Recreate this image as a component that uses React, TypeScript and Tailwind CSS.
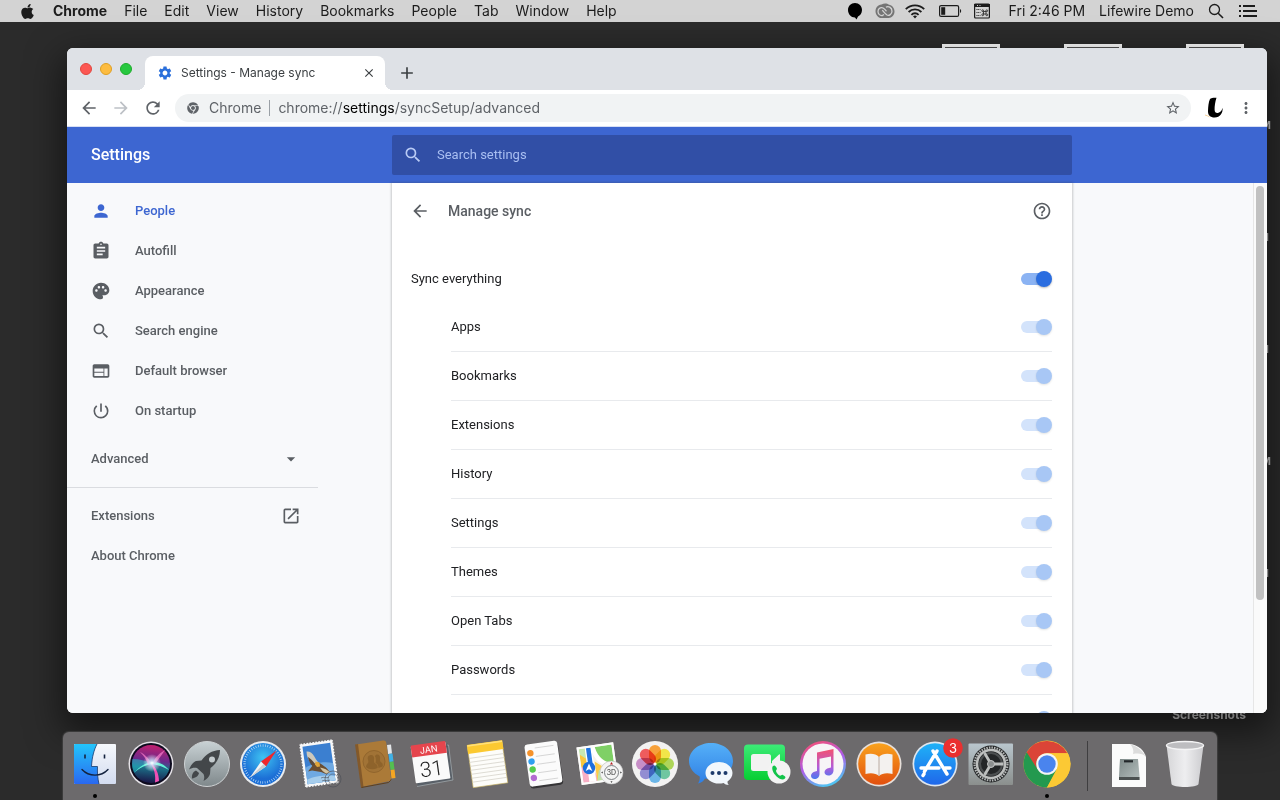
import { useId, type ReactNode } from "react";
import { clsx } from "clsx";
import { FaApple, FaChrome } from "react-icons/fa";
import {
    MdAdd,
    MdArrowBack,
    MdArrowDropDown,
    MdArrowForward,
    MdAssignment,
    MdClose,
    MdHelpOutline,
    MdMoreVert,
    MdOpenInNew,
    MdPalette,
    MdPerson,
    MdPowerSettingsNew,
    MdRefresh,
    MdSearch,
    MdSettings,
    MdStarBorder,
    MdWeb,
} from "react-icons/md";

const menus = ["File", "Edit", "View", "History", "Bookmarks", "People", "Tab", "Window", "Help"];

const sections = [
    { label: "People", icon: <MdPerson /> },
    { label: "Autofill", icon: <MdAssignment /> },
    { label: "Appearance", icon: <MdPalette /> },
    { label: "Search engine", icon: <MdSearch /> },
    { label: "Default browser", icon: <MdWeb /> },
    { label: "On startup", icon: <MdPowerSettingsNew /> },
];

const syncTypes = [
    "Apps",
    "Bookmarks",
    "Extensions",
    "History",
    "Settings",
    "Themes",
    "Open Tabs",
    "Passwords",
];

export default function App() {
    return (
        <div className="relative isolate flex h-screen flex-col overflow-hidden bg-[#2b2b2b] font-['Roboto',sans-serif]">
            <MenuBar />
            <DesktopFiles />
            <main className="flex min-h-0 flex-1 pt-[26px] pr-[13px] pb-[19px] pl-[67px]">
                <BrowserWindow />
            </main>
            <Dock />
        </div>
    );
}

/* ---------- Menu bar ---------- */

function MenuBar() {
    return (
        <header className="flex h-[22px] shrink-0 items-center justify-between bg-[#d3d3d3] pr-[22px] pl-[19px] font-['Inter',sans-serif] text-sm text-[#1c1c1c]">
            <nav className="flex items-center gap-[17px]">
                <button aria-label="Apple menu" className="text-[17px]">
                    <FaApple />
                </button>
                <button className="font-bold">Chrome</button>
                {menus.map((menu) => (
                    <button key={menu}>{menu}</button>
                ))}
            </nav>
            <div className="flex items-center">
                <svg className="mr-3 h-[18px] w-4" viewBox="0 0 16 18">
                    <path d="M8 1c4 0 7 3 7 7 0 3.500-2 5.500-4 6.500L9.500 17.500 8 15.500C4 15.500 1 12 1 8s3-7 7-7z" fill="#000" />
                </svg>
                <svg className="mr-2.5 h-[18px] w-5" viewBox="0 0 20 18">
                    <path d="M6.500 2.500C2.500 3 .5 6 .5 9.200S3 16 6.500 16h7c3.500 0 6-3 6-6.500S17 3.200 14 2.800C12 1.200 9 1.200 6.500 2.500z" fill="#757575" />
                    <path d="M9 12.500 7.500 13.500C5 14 3 12 3 9.500S5 5.500 7 5.700c1.500.1 2.500 1.300 4.500 3.600M11 5.200c2-1.500 6 0 6 4 0 3-3 4.800-5 3.800-1.500-.8-2.500-2.200-4.700-4.800" fill="none" stroke="#d3d3d3" strokeWidth="1.300" />
                </svg>
                <svg className="mr-3.5 h-4 w-5" viewBox="0 0 20 16">
                    <g fill="none" stroke="#1c1c1c" strokeWidth="1.800">
                        <path d="M.8 6.200a13 13 0 0 1 18.400 0" />
                        <path d="M3.600 9a9 9 0 0 1 12.800 0" />
                        <path d="M6.400 11.800a5 5 0 0 1 7.200 0" />
                    </g>
                    <path d="M10 15.500 8 13.300a3 3 0 0 1 4 0z" fill="#1c1c1c" />
                </svg>
                <svg className="mr-3 h-3.5 w-[23px]" viewBox="0 0 23 14">
                    <rect x=".6" y="1.600" width="19" height="10.800" rx="1.500" fill="none" stroke="#1c1c1c" strokeWidth="1.200" />
                    <rect x="2.200" y="3.200" width="4" height="7.600" fill="#1c1c1c" />
                    <path d="M21 5c1.600.5 1.600 3.500 0 4z" fill="#1c1c1c" />
                </svg>
                <svg className="mr-[19px] size-4" viewBox="0 0 16 16">
                    <rect x=".6" y="1" width="14.800" height="14" rx="1" fill="none" stroke="#1c1c1c" strokeWidth="1.200" />
                    <path d="M0 1h16v3H0z" fill="#1c1c1c" />
                    <path d="M3 2.500h1m1.500 0h1" stroke="#d3d3d3" />
                    <path d="M2.500 6.500h4m-4 3h4m-4 3h4" stroke="#1c1c1c" strokeDasharray="1 .8" />
                    <path d="M9.500 8.500h2.500v2.500h-2.500z" fill="none" stroke="#1c1c1c" strokeWidth=".8" />
                    <g fill="none" stroke="#1c1c1c" strokeWidth=".8">
                        <circle cx="8.700" cy="7.700" r=".9" />
                        <circle cx="12.800" cy="7.700" r=".9" />
                        <circle cx="8.700" cy="11.800" r=".9" />
                        <circle cx="12.800" cy="11.800" r=".9" />
                    </g>
                </svg>
                <span className="mr-3.5">Fri 2:46 PM</span>
                <span className="mr-3.5">Lifewire Demo</span>
                <button aria-label="Spotlight" className="mr-[15px]">
                    <svg className="size-4" viewBox="0 0 16 16" fill="none" stroke="#1c1c1c">
                        <circle cx="6.500" cy="6.500" r="5" strokeWidth="1.300" />
                        <path d="m10.200 10.200 4.800 4.800" strokeWidth="1.600" />
                    </svg>
                </button>
                <button aria-label="Notification center">
                    <svg className="h-3 w-[19px]" viewBox="0 0 19 12" stroke="#1c1c1c" strokeWidth="2">
                        <path d="M0 1h2M4 1h12M0 6h2M4 6h14M0 11h2M4 11h14" />
                    </svg>
                </button>
            </div>
        </header>
    );
}

/* ---------- Desktop files that peek out from behind the window ---------- */

function DesktopFiles() {
    return (
        <div className="absolute inset-0 -z-10 text-[11px] leading-4 font-bold text-[#c8c8c8]">
            <div className="absolute top-11 right-9 flex gap-16">
                <span className="h-10 w-[58px] border-3 border-white bg-[#555]" />
                <span className="h-10 w-[58px] border-3 border-white bg-[#555]" />
                <span className="h-10 w-[58px] border-3 border-white bg-[#555]" />
            </div>
            <div className="absolute top-[118px] right-[9px] flex flex-col items-end gap-24">
                <span>M</span>
                <span className="pr-0.5">M</span>
                <span className="pr-0.5">M</span>
                <span>M</span>
                <span className="pr-0.5">M</span>
            </div>
            <span className="absolute right-[34px] bottom-[77px] font-['Inter',sans-serif] text-xs text-[#d0d0d0]">
                Screenshots
            </span>
        </div>
    );
}

/* ---------- Browser ---------- */

function BrowserWindow() {
    return (
        <section className="flex min-w-0 flex-1 flex-col overflow-hidden rounded-md bg-white shadow-[0_14px_34px_6px_rgba(0,0,0,0.5)]">
            <TabStrip />
            <Toolbar />
            <SettingsHeader />
            <div className="flex min-h-0 flex-1 bg-[#f8f9fb]">
                <Sidebar />
                <SyncCard />
                <div className="flex-1" />
                <div className="w-3.5 shrink-0 border-l border-[#e6e6e6] bg-[#fafafa] px-0.5 pt-[3px]">
                    <div className="h-[414px] w-2 rounded-full bg-[#c1c1c1]" />
                </div>
            </div>
        </section>
    );
}

function TabStrip() {
    return (
        <div className="flex h-[42px] shrink-0 items-end bg-[#dee1e6]">
            <div className="flex h-full w-[78px] gap-2 pt-[15px] pl-[13px]">
                <button aria-label="Close" className="size-3 rounded-full border border-[#e2463f] bg-[#fc5753]" />
                <button aria-label="Minimize" className="size-3 rounded-full border border-[#dfa023] bg-[#fdbc40]" />
                <button aria-label="Zoom" className="size-3 rounded-full border border-[#1dad2b] bg-[#27c840]" />
            </div>
            <div
                className={clsx(
                    "relative flex h-[34px] w-60 items-center rounded-t-lg bg-white pr-[9px] pl-3 text-[#3c4043]",
                    "before:absolute before:bottom-0 before:-left-2 before:size-2 before:bg-[radial-gradient(circle_at_0_0,transparent_8px,#fff_8px)]",
                    "after:absolute after:-right-2 after:bottom-0 after:size-2 after:bg-[radial-gradient(circle_at_100%_0,transparent_8px,#fff_8px)]",
                )}>
                <MdSettings className="size-4 text-[#2a6fdb]" />
                <span className="ml-2 flex-1 font-['Inter',sans-serif] text-xs">Settings - Manage sync</span>
                <button aria-label="Close tab" className="text-[#3c4043]">
                    <MdClose className="size-3.5" />
                </button>
            </div>
            <button aria-label="New tab" className="mb-[7px] ml-3 text-[#3c4043]">
                <MdAdd className="size-5" />
            </button>
        </div>
    );
}

function Toolbar() {
    return (
        <div className="flex h-[37px] shrink-0 items-center border-b border-[#d7dff5] bg-white px-3 text-[#5f6368]">
            <button aria-label="Back">
                <MdArrowBack className="size-5" />
            </button>
            <button aria-label="Forward" className="ml-3 text-[#bdc1c6]" disabled>
                <MdArrowForward className="size-5" />
            </button>
            <button aria-label="Reload" className="ml-3">
                <MdRefresh className="size-5" />
            </button>
            <div className="ml-3 flex h-7 flex-1 items-center rounded-full bg-[#f1f3f4] pr-2.5 pl-3 font-['Inter',sans-serif] text-sm">
                <FaChrome className="size-3" />
                <span className="ml-2.5">Chrome</span>
                <span className="mx-2 h-4 w-px bg-[#9aa0a6]" />
                <a href="#" className="flex-1">
                    chrome://<span className="text-black">settings</span>/syncSetup/advanced
                </a>
                <button aria-label="Bookmark this page">
                    <MdStarBorder className="size-4" />
                </button>
            </div>
            <button aria-label="Profile" className="ml-3">
                <svg className="size-6" viewBox="0 0 24 24">
                    <path d="M7 3c1-1 4.500-1.600 6.500-1.200-1.300 4-2 8.500-1.900 12 .1 2.700 1.700 3.800 3.900 3 2.200-.8 3.500-2.500 4-5 .7 5-2.500 9.700-7.800 9.700-4.600 0-7-2.500-6.700-7C5.200 10.500 5.500 6 7 3z" fill="#000" />
                    <path d="M2 19c1.500.3 3 1 4.500 1.800" stroke="#f5d29d" fill="none" />
                </svg>
            </button>
            <button aria-label="Menu" className="ml-2.5">
                <MdMoreVert className="size-[18px]" />
            </button>
        </div>
    );
}

function SettingsHeader() {
    return (
        <div className="flex h-14 shrink-0 items-center bg-[#3d66d1]">
            <h1 className="w-[325px] shrink-0 pl-6 text-base font-medium text-white">Settings</h1>
            <label className="flex h-10 w-[680px] items-center gap-3.5 rounded-xs bg-[#314fa6] pl-[11px] text-[#b9cbf5]">
                <MdSearch className="size-5" />
                <input
                    type="search"
                    aria-label="Search settings"
                    placeholder="Search settings"
                    className="flex-1 bg-transparent text-[13px] outline-none placeholder:text-[#a9bff2]"
                />
            </label>
        </div>
    );
}

function Sidebar() {
    return (
        <aside className="w-[325px] shrink-0 text-[13px] font-medium text-[#5a5e63]">
            <nav className="w-[251px]">
                <div className="py-2">
                    {sections.map(({ label, icon }) => (
                        <a
                            key={label}
                            href="#"
                            className={clsx(
                                "flex h-10 items-center gap-6 pl-6",
                                label === "People" && "text-[#3d66d1]",
                            )}>
                            <span className="text-xl">{icon}</span>
                            {label}
                        </a>
                    ))}
                </div>
                <button className="mb-2 flex h-10 w-full items-center justify-between pr-[17px] pl-6">
                    Advanced
                    <MdArrowDropDown className="size-5" />
                </button>
                <div className="border-t border-[#dadce0] py-2">
                    <a href="#" className="flex h-10 items-center justify-between pr-[17px] pl-6">
                        Extensions
                        <MdOpenInNew className="size-5" />
                    </a>
                    <a href="#" className="flex h-10 items-center pl-6">
                        About Chrome
                    </a>
                </div>
            </nav>
        </aside>
    );
}

function SyncCard() {
    return (
        <div className="w-[680px] overflow-hidden bg-white shadow-[0_0_2px_1px_rgba(60,64,67,0.25)]">
            <div className="flex h-14 items-center pr-5 pl-[18px] text-[#5a5e63]">
                <button aria-label="Back">
                    <MdArrowBack className="size-5" />
                </button>
                <h2 className="ml-[18px] flex-1 text-sm font-medium">Manage sync</h2>
                <a href="#" aria-label="Help">
                    <MdHelpOutline className="size-5" />
                </a>
            </div>
            <div className="mt-4 pr-5 pl-[19px]">
                <ToggleRow label="Sync everything" />
                <div className="pl-10">
                    {syncTypes.map((type) => (
                        <div key={type} className="border-b border-[#e8eaed]">
                            <ToggleRow label={type} disabled />
                        </div>
                    ))}
                    <ToggleRow disabled />
                </div>
            </div>
        </div>
    );
}

function ToggleRow(props: {
    label?: string,
    disabled?: boolean,
}) {
    const id = useId();

    return (
        <div className="flex h-12 items-center text-[13px] text-[#202124]">
            {props.label && <label htmlFor={id}>{props.label}</label>}
            <input
                id={id}
                type="checkbox"
                role="switch"
                aria-label={props.label ?? "More"}
                defaultChecked
                disabled={props.disabled}
                className={clsx(
                    "relative ml-auto h-4 w-[31px] appearance-none",
                    "before:absolute before:top-0.5 before:left-0 before:h-3 before:w-7 before:rounded-full before:bg-[#8bb3f3]",
                    "after:absolute after:top-0 after:right-0 after:size-4 after:rounded-full after:bg-[#2a6de0] after:shadow-[0_1px_2px_rgba(60,64,67,0.35)]",
                    "disabled:before:bg-[#d3e3fb] disabled:after:bg-[#a8c7f5] disabled:after:shadow-[0_1px_2px_rgba(60,64,67,0.15)]",
                )}
            />
        </div>
    );
}

/* ---------- Dock ---------- */

function Dock() {
    return (
        <footer className="mx-auto flex h-[68px] shrink-0 items-start rounded-t-md bg-[#6c6a6c] px-1 shadow-[0_0_1px_1px_#3d3d3d]">
            <DockIcon name="Finder" running><Finder /></DockIcon>
            <DockIcon name="Siri"><Siri /></DockIcon>
            <DockIcon name="Launchpad"><Launchpad /></DockIcon>
            <DockIcon name="Safari"><Safari /></DockIcon>
            <DockIcon name="Mail"><Mail /></DockIcon>
            <DockIcon name="Contacts"><Contacts /></DockIcon>
            <DockIcon name="Calendar"><Calendar /></DockIcon>
            <DockIcon name="Notes"><Notes /></DockIcon>
            <DockIcon name="Reminders"><Reminders /></DockIcon>
            <DockIcon name="Maps"><Maps /></DockIcon>
            <DockIcon name="Photos"><Photos /></DockIcon>
            <DockIcon name="Messages"><Messages /></DockIcon>
            <DockIcon name="FaceTime"><FaceTime /></DockIcon>
            <DockIcon name="iTunes"><ITunes /></DockIcon>
            <DockIcon name="iBooks"><IBooks /></DockIcon>
            <DockIcon name="App Store"><AppStore /></DockIcon>
            <DockIcon name="System Preferences"><SystemPreferences /></DockIcon>
            <DockIcon name="Chrome" running><ChromeLogo /></DockIcon>
            <span className="mx-3 mt-[9px] h-[50px] w-0.5 border-l border-[#3f3e40]" />
            <DockIcon name="Disk image"><DiskImage /></DockIcon>
            <DockIcon name="Trash"><Trash /></DockIcon>
        </footer>
    );
}

function DockIcon(props: {
    name: string,
    running?: boolean,
    children: ReactNode,
}) {
    return (
        <button aria-label={props.name}>
            <svg className="h-[68px] w-14" viewBox="0 0 56 68">
                {props.children}
                {props.running && <circle cx="28" cy="64" r="2" fill="#000" />}
            </svg>
        </button>
    );
}

function Finder() {
    return (
        <>
            <defs>
                <linearGradient id="finder-l" x1="0" y1="0" x2="0" y2="1">
                    <stop offset="0" stopColor="#23c5fb" />
                    <stop offset="1" stopColor="#2a68f0" />
                </linearGradient>
                <linearGradient id="finder-r" x1="0" y1="0" x2="0" y2="1">
                    <stop offset="0" stopColor="#f6f8fc" />
                    <stop offset="1" stopColor="#d3dcf0" />
                </linearGradient>
            </defs>
            <rect x="7" y="12" width="42" height="40" rx="1" fill="url(#finder-r)" />
            <path d="M8 12h22c-3 6-5 13-5.500 22.500h6c-.3 6 .2 12 1.500 17.500H8a1 1 0 0 1-1-1V13a1 1 0 0 1 1-1z" fill="url(#finder-l)" />
            <path d="M30 12c-3 6-5 13-5.500 22.500h6c-.3 6 .2 12 1.500 17.500" fill="none" stroke="#173a6e" strokeWidth=".8" />
            <path d="M18 22.500v4M37.500 22.500v4" stroke="#14233f" strokeWidth="1.600" />
            <path d="M15 37.500c7 7.500 19 7.500 26 0" fill="none" stroke="#14233f" strokeWidth="1.400" strokeLinecap="round" />
        </>
    );
}

function Siri() {
    return (
        <>
            <defs>
                <linearGradient id="siri" x1=".5" y1="0" x2=".4" y2="1">
                    <stop offset="0" stopColor="#c0206f" />
                    <stop offset=".4" stopColor="#6a2a8c" />
                    <stop offset=".6" stopColor="#1c6f88" />
                    <stop offset="1" stopColor="#1a1446" />
                </linearGradient>
                <radialGradient id="siri-glow">
                    <stop offset="0" stopColor="#fff" />
                    <stop offset=".3" stopColor="#cfe9ff" stopOpacity=".8" />
                    <stop offset="1" stopColor="#fff" stopOpacity="0" />
                </radialGradient>
            </defs>
            <circle cx="28" cy="32" r="22.500" fill="#e4e1e6" />
            <circle cx="28" cy="32" r="21" fill="#0d0a1e" />
            <circle cx="28" cy="32" r="19" fill="url(#siri)" />
            <path d="M9.500 27c7 0 13 2 20 4-8 2-14 5-18 10-2-4-3-9-2-14z" fill="#24b7c4" opacity=".55" />
            <path d="M12 40c6-5 11-7 17-8 6 1 12 3 17 6-5-6-10-8-17-8-7 1-13 5-17 10z" fill="#5ff2d6" />
            <path d="M28 31c-2-5-7-9-11-11 5 5 7 9 8 13zM30 31c2-6 7-10 12-13-4 6-7 10-10 14z" fill="#ef76c4" opacity=".8" />
            <path d="M28 32c3 5 5 11 4 18.500l4-1.500C36 42 33 36 29 31z" fill="#f24fb4" />
            <circle cx="29" cy="31" r="9" fill="url(#siri-glow)" />
        </>
    );
}

function Launchpad() {
    return (
        <>
            <defs>
                <linearGradient id="launchpad" x1="0" y1="0" x2="0" y2="1">
                    <stop offset="0" stopColor="#c8d1d4" />
                    <stop offset="1" stopColor="#7f888b" />
                </linearGradient>
            </defs>
            <circle cx="28" cy="32" r="22.500" fill="url(#launchpad)" stroke="#cfd3d5" strokeWidth="1" />
            <path d="M41 18c-8 .5-14 4-18.500 10.500L17 29c-3 1-5.500 5-7 8.500 2.500-1.500 5-2 8-1.500l6.500 6c1 2.500 1 4 0 7 3.500-2 6-4.500 6.500-7l.5-6C37 32 41 26 41 18z" fill="#43474a" />
            <path d="M17 38.500c-2.500 1-4.500 3.500-4 8 3.500-.5 6.500-2.500 7-5.500z" fill="#43474a" />
            <circle cx="33" cy="27.500" r="3" fill="#c3cacd" />
        </>
    );
}

function Safari() {
    return (
        <>
            <defs>
                <radialGradient id="safari" cy=".35">
                    <stop offset="0" stopColor="#3fc4f2" />
                    <stop offset="1" stopColor="#1c6fd6" />
                </radialGradient>
            </defs>
            <circle cx="28" cy="32" r="23" fill="#e9ecef" />
            <circle cx="28" cy="32" r="21" fill="url(#safari)" />
            <circle cx="28" cy="32" r="18.500" fill="none" stroke="#cfe9fb" strokeWidth="2.400" strokeDasharray=".6 1.800" />
            <path d="M41.500 18.500 31 34.500 26 29.500z" fill="#f0262b" />
            <path d="M31 34.500 15 45.500l11-16z" fill="#f4f4f4" />
            <path d="M31 34.500 15 45.500 28.500 32z" fill="#c9cdd1" />
        </>
    );
}

function Mail() {
    return (
        <>
            <g transform="rotate(-8 28 32)">
                <rect x="11" y="9.500" width="34" height="44" fill="#f7f7f7" />
                <rect x="11" y="9.500" width="34" height="44" fill="none" stroke="#6c6a6c" strokeWidth="1.400" strokeDasharray="1.400 1.600" />
                <rect x="14" y="12.500" width="28" height="38" fill="#3b7fd0" />
                <path d="M14 34c8-4 20-4 28-1v17.500H14z" fill="#6fa9e2" />
                <path d="M14 46c8-3 20-2 28 0v4.500H14z" fill="#a6cdec" />
            </g>
            <path d="M15.500 19.500c3-.5 6 1.500 7.500 4.500 1.500 2.500 2.500 4.500 4.500 6.500l-5 3c-4-3-7-8.500-7-14z" fill="#cdc8bb" />
            <path d="M17 25c2.500 1.500 5 4 8 8l-3 1.500c-2.500-2-4.300-5.500-5-9.500z" fill="#5b4a3a" />
            <path d="M22 33l5-3c4 3 8.500 4.500 12 10.500l-4 1.500-5-2-9-1.500-4 1z" fill="#6a4d31" />
            <path d="M29 35.500c4 .5 8 2.500 10.500 5.500l-4.500.5c-2.500-1.500-4.500-3.500-6-6z" fill="#d2c3a2" />
            <path d="m24.500 29.500 4 1 .5 4-3 .5-2-2.500z" fill="#e0a63b" />
            <circle cx="42" cy="47" r="8" fill="none" stroke="#4b4f57" strokeWidth=".8" opacity=".8" />
            <circle cx="42" cy="47" r="5" fill="none" stroke="#4b4f57" strokeWidth=".7" opacity=".7" />
            <path d="M30 46c3-2 5 1 8-1M31 49c3-2 5 1 8-1" fill="none" stroke="#4b4f57" strokeWidth=".6" />
        </>
    );
}

function Contacts() {
    return (
        <>
            <path d="m40 13 4-.5 1 9-4 .5z" fill="#e3e6e8" />
            <path d="m41.500 22 4-.5 1 8-4 .5z" fill="#3fb1e6" />
            <path d="m42.500 30 4-.5 1 8-4 .5z" fill="#54bf50" />
            <path d="m43.500 38 4-.5 1 8.500-4 .5z" fill="#f5a623" />
            <path d="M9 12.500 36 8.500c2-.2 3 .5 3.300 2.500l4.700 35c.2 2-.5 3-2.500 3.300L14.500 55z" fill="#ab7a38" />
            <path d="m8 12.500 3-.4L16.500 55l-2.500.8z" fill="#83592a" />
            <path d="m14.500 55.500 27-5 2-2 .5-1" fill="none" stroke="#5f401d" />
            <circle cx="27" cy="29.500" r="11" fill="#a17336" stroke="#8e632b" strokeWidth=".9" />
            <path d="M23.500 23c3-.5 4 2 3.500 5-.2 2 0 3 2 4 1 .5 2 2 1.500 4-4 2-9 1.500-11.500-1 0-2 1-3 2-4 .8-1 .3-2-.2-4-.4-2 .7-3.700 2.700-4z" fill="#8e632b" />
            <path d="M29.500 22.500c3-.5 4 2 3.500 4.500-.2 2 .2 3 2 4 .8.500 1 2 .5 3.500l-4 1.500c0-3-1-4-3-5 .7-3 .5-5-.6-7z" fill="#8e632b" />
        </>
    );
}

function Calendar() {
    return (
        <>
            <path d="m41 12 4-.5 4.500 36L15 54l-2-5z" fill="#596068" />
            <path d="M44 13h1.500L50 48 14 54.500" fill="none" stroke="#9aa3a8" strokeWidth=".8" />
            <g transform="rotate(-8 28 30)">
                <rect x="10" y="12" width="35" height="37" rx="1" fill="#fafafa" />
                <path d="M11 11h33a1 1 0 0 1 1 1v11H10V12a1 1 0 0 1 1-1z" fill="#e5454d" />
                <text x="27.500" y="20.500" textAnchor="middle" fontSize="9" fill="#fff" fontFamily="Inter, sans-serif">JAN</text>
                <text x="27.500" y="44" textAnchor="middle" fontSize="21" fontWeight="300" fill="#222" fontFamily="Roboto, sans-serif">31</text>
            </g>
        </>
    );
}

function Notes() {
    return (
        <g transform="rotate(-8 28 32)">
            <rect x="11" y="11" width="35" height="42.500" fill="#fdfdfa" stroke="#c9b25c" strokeWidth=".6" />
            <rect x="10.700" y="10.500" width="35.600" height="9" fill="#fbc931" />
            <path d="M11 11.500h35" stroke="#ffe07a" strokeWidth="1.500" />
            <path d="M11 24h35M11 28h35M11 32h35M11 36h35M11 40h35M11 44h35M11 48h35" stroke="#d2d0c6" strokeWidth=".7" />
        </g>
    );
}

function Reminders() {
    return (
        <g transform="rotate(-8 28 32)">
            <rect x="12.500" y="12" width="33" height="43" rx="3" fill="#353436" />
            <rect x="12" y="10.500" width="33" height="42.500" rx="3" fill="#fbfbfb" />
            <circle cx="17" cy="19.500" r="3.200" fill="#f5922a" />
            <circle cx="17" cy="28" r="3.200" fill="#2f9fef" />
            <circle cx="17" cy="36" r="3.200" fill="#55cc4c" />
            <circle cx="17" cy="44.500" r="3.200" fill="#b36bd0" />
            <path d="M22 15h19M22 23.500h19M22 31.500h19M22 40h19M22 48h19" stroke="#cfcfcf" strokeWidth=".8" />
        </g>
    );
}

function Maps() {
    return (
        <>
            <g transform="rotate(-8 28 32)">
                <rect x="8" y="12.500" width="37" height="38" fill="#f4f1e8" />
                <path d="M10 14.500h7v17h-7z" fill="#c5e8b2" />
                <path d="M10 31h9l8 17.500H10z" fill="#f8aec5" />
                <path d="M10 20l6 5v8h-6z" fill="#fac73c" />
                <path d="M26 14.500h17v19c-9-2-15-8-17-19z" fill="#7fd066" />
                <path d="M24 14.500c1 12 9 20 19 21" fill="none" stroke="#fff" strokeWidth="4" />
                <path d="m24 29 11 9-11 10.500z" fill="#fbcb48" />
                <path d="M27 38h16v10.500H24z" fill="#bfe3a6" />
                <path d="M19.500 14.500v34" stroke="#fff" strokeWidth="7" />
                <path d="M19.500 14.500v20" stroke="#1f74e0" strokeWidth="4.500" />
                <rect x="9" y="13.500" width="35" height="36" fill="none" stroke="#fdfdfd" strokeWidth="2" />
            </g>
            <circle cx="18" cy="36" r="6.200" fill="#1d6fdd" />
            <path d="m18 31.500 3.300 7.500-3.300-1.700-3.300 1.700z" fill="#fff" />
            <circle cx="40.500" cy="40.500" r="11.500" fill="#f4f4f4" stroke="#bcbcbc" strokeWidth=".6" />
            <circle cx="40.500" cy="40.500" r="7" fill="none" stroke="#6f7376" strokeWidth=".9" />
            <text x="40.500" y="43" textAnchor="middle" fontSize="7" fill="#333" fontFamily="Inter, sans-serif">3D</text>
            <path d="m40.500 30 1.500 2.500h-3z" fill="#b32020" />
            <path d="m40.500 51 1-1.800h-2zM30 40.500l1.800 1v-2zM51 40.500l-1.800 1v-2z" fill="#444" />
        </>
    );
}

const petals = ["#f89a2b", "#f2e43a", "#a8d34c", "#64c29a", "#5fb0e6", "#8a84d0", "#c485c4", "#ee4f50"];

function Photos() {
    return (
        <>
            <circle cx="28" cy="32" r="23" fill="#f3f2f2" />
            <g className="isolate">
                {petals.map((color, i) => (
                    <rect
                        key={color}
                        x="22"
                        y="13"
                        width="12"
                        height="18"
                        rx="6"
                        fill={color}
                        opacity=".92"
                        className="mix-blend-multiply"
                        transform={`rotate(${i * 45} 28 32)`}
                    />
                ))}
            </g>
            <circle cx="28" cy="32" r="1.500" fill="#fff" />
        </>
    );
}

function Messages() {
    return (
        <>
            <defs>
                <linearGradient id="messages" x1="0" y1="0" x2="0" y2="1">
                    <stop offset="0" stopColor="#55b0f8" />
                    <stop offset="1" stopColor="#2f7fe4" />
                </linearGradient>
            </defs>
            <path d="M28 11c12.500 0 22 8 22 18s-9.500 18-22 18c-2 0-4-.2-6-.6-1.500 2.600-3.500 4.200-7 5 1.500-2.200 2-4.500 1.700-7C10 41 6 35.500 6 29c0-10 9.500-18 22-18z" fill="url(#messages)" />
            <path d="M36 30c7.500 0 13.500 4.800 13.500 11 0 3.500-2 6.500-5 8.500-.1 1.500.4 2.600 1.300 3.600-2.400-.1-4-.9-5.200-2-1.500.4-3 .5-4.600.5-7.500 0-13.500-4.500-13.500-10.600S28.500 30 36 30z" fill="#f2f7fc" />
            <circle cx="29.500" cy="41" r="2" fill="#1d3a6b" />
            <circle cx="36" cy="41" r="2" fill="#1d3a6b" />
            <circle cx="42.500" cy="41" r="2" fill="#1d3a6b" />
        </>
    );
}

function FaceTime() {
    return (
        <>
            <defs>
                <linearGradient id="facetime" x1="0" y1="0" x2="0" y2="1">
                    <stop offset="0" stopColor="#3ceb77" />
                    <stop offset="1" stopColor="#07ce33" />
                </linearGradient>
            </defs>
            <rect x="5" y="12.500" width="41" height="35.500" rx="4" fill="url(#facetime)" />
            <rect x="12" y="22" width="20" height="17" rx="2.500" fill="#f2f2f2" />
            <path d="m33 29 7-6.500c.8-.5 1 .2 1 1v14l-8-5z" fill="#f2f2f2" />
            <circle cx="40" cy="40" r="11.500" fill="#f3f3f3" />
            <path d="M34 34c1.300-1.200 2.500-.5 3.800 2.200.6 1.300-1 1.900-.8 2.800.6 2.200 2 3.800 4 4.700.9.300 1.600-1.400 2.900-.8 2.600 1.300 3.100 2.400 2 3.600-1.700 1.900-5 1.200-8.300-2-3.600-3.500-5.500-8.600-3.600-10.500z" fill="#12c44a" />
        </>
    );
}

function ITunes() {
    return (
        <>
            <defs>
                <linearGradient id="itunes-ring" x1=".2" y1="0" x2=".6" y2="1">
                    <stop offset="0" stopColor="#f64f70" />
                    <stop offset=".5" stopColor="#b05ae8" />
                    <stop offset="1" stopColor="#4bc8f2" />
                </linearGradient>
                <linearGradient id="itunes-note" x1="0" y1="0" x2="0" y2="1">
                    <stop offset="0" stopColor="#f4506e" />
                    <stop offset=".6" stopColor="#b45bd8" />
                    <stop offset="1" stopColor="#4a79f0" />
                </linearGradient>
            </defs>
            <circle cx="28" cy="32" r="23" fill="url(#itunes-ring)" />
            <circle cx="28" cy="32" r="20.500" fill="#f7f5f7" />
            <path d="M22 20.500 38.500 17v21.500c0 3-2.500 5-5 5s-4-1.500-4-3.200c0-2.300 2-3.800 4.500-4.300l2-.5V24.500l-11.500 2.300V42c0 3-2.300 5-4.800 5s-3.700-1.500-3.700-3.200c0-2.300 2-3.800 4.200-4.300l1.800-.5z" fill="url(#itunes-note)" />
        </>
    );
}

function IBooks() {
    return (
        <>
            <defs>
                <linearGradient id="ibooks" x1="0" y1="0" x2="0" y2="1">
                    <stop offset="0" stopColor="#f9a21c" />
                    <stop offset="1" stopColor="#e2500f" />
                </linearGradient>
            </defs>
            <circle cx="28" cy="32" r="22.500" fill="#e6dfda" />
            <circle cx="28" cy="32" r="20.800" fill="url(#ibooks)" />
            <path d="M28 25c-3-3.500-8.500-4-13.500-2.500V42c5-1.500 10.500-1 13.500 2 3-3 8.500-3.500 13.500-2V22.500C36.500 21 31 21.500 28 25z" fill="#f3f1ef" />
            <path d="M28 25v19" stroke="#b9aaa0" strokeWidth="1" />
        </>
    );
}

function AppStore() {
    return (
        <>
            <defs>
                <linearGradient id="appstore" x1="0" y1="0" x2="0" y2="1">
                    <stop offset="0" stopColor="#1fb2f7" />
                    <stop offset="1" stopColor="#1f67ea" />
                </linearGradient>
            </defs>
            <circle cx="28" cy="32" r="22.500" fill="#dfe6ee" />
            <circle cx="28" cy="32" r="20.800" fill="url(#appstore)" />
            <path d="m26 19 14 23M30 19 17.500 39.500M14 36h18M38 36h5M17 42l-1 1.500" fill="none" stroke="#fff" strokeWidth="3.400" strokeLinecap="round" />
            <circle cx="46" cy="16" r="9.800" fill="#ea2f2f" />
            <text x="46" y="20.500" textAnchor="middle" fontSize="13" fill="#fff" fontFamily="Inter, sans-serif">3</text>
        </>
    );
}

function SystemPreferences() {
    return (
        <>
            <defs>
                <linearGradient id="sysprefs" x1="0" y1="0" x2="0" y2="1">
                    <stop offset="0" stopColor="#b9c6cd" />
                    <stop offset="1" stopColor="#8b8f8d" />
                </linearGradient>
            </defs>
            <rect x="5.500" y="11.500" width="44.500" height="41.500" rx="1" fill="url(#sysprefs)" />
            <circle cx="28" cy="32" r="18.500" fill="#242627" />
            <circle cx="28" cy="32" r="16.500" fill="none" stroke="#b4b7b7" strokeWidth="2.200" strokeDasharray="1.500 1.090" />
            <circle cx="28" cy="32" r="14" fill="none" stroke="#bdbfbe" strokeWidth="2.600" />
            <circle cx="28" cy="32" r="11" fill="none" stroke="#4c4f50" strokeWidth="2" />
            <path d="M28 32h12.500M28 32l-6.500-11M28 32l-6.500 11" stroke="#bdbfbe" strokeWidth="2.800" />
            <circle cx="28" cy="32" r="3.500" fill="#8d9090" stroke="#c4c6c5" />
        </>
    );
}

function ChromeLogo() {
    return (
        <>
            <circle cx="28" cy="32" r="23.500" fill="#fcc934" />
            <path d="M28 32 7.650 20.250A23.500 23.500 0 0 0 28 55.500l10.200-17.600z" fill="#23994f" />
            <path d="M7.650 20.250A23.500 23.500 0 0 1 48.350 21.300L28 21.300a10.800 10.800 0 0 0-9.400 16.100z" fill="#db4437" />
            <path d="M28 21.200h20.900a23.500 23.500 0 0 1 2.600 10.800A23.500 23.500 0 0 1 28 55.500l9.400-18.100z" fill="#fcc934" />
            <circle cx="28" cy="32" r="10.800" fill="#f5f5f5" />
            <circle cx="28" cy="32" r="8.700" fill="#4a84ee" />
        </>
    );
}

function DiskImage() {
    return (
        <>
            <defs>
                <linearGradient id="disk" x1="0" y1="0" x2="1" y2="1">
                    <stop offset="0" stopColor="#7d8988" />
                    <stop offset="1" stopColor="#b5bfbe" />
                </linearGradient>
            </defs>
            <path d="M11 12h18c8 1 14 6 16 13v30H11z" fill="#fbfbfb" />
            <path d="M29 12c3 3 4 7 3 10 5-1 10-.5 13 3-3-6-9-11-16-13z" fill="#dcdcdc" />
            <path d="M19 27h18l1.500 17v4h-20.500v-4z" fill="url(#disk)" />
            <path d="M18 45h20.500v3H18z" fill="#4b5151" />
            <path d="M23 29.300h9" stroke="#22272a" strokeWidth="2.200" />
        </>
    );
}

function Trash() {
    return (
        <>
            <defs>
                <linearGradient id="trash">
                    <stop offset="0" stopColor="#d6d6d8" />
                    <stop offset=".5" stopColor="#eeeef0" />
                    <stop offset="1" stopColor="#cccccf" />
                </linearGradient>
            </defs>
            <path d="M9.500 13 14.500 52c1 4 26 4 27 0l5-39z" fill="url(#trash)" />
            <ellipse cx="28" cy="13.500" rx="18.500" ry="4" fill="#bdbdc0" stroke="#f4f4f5" strokeWidth="1.400" />
        </>
    );
}
